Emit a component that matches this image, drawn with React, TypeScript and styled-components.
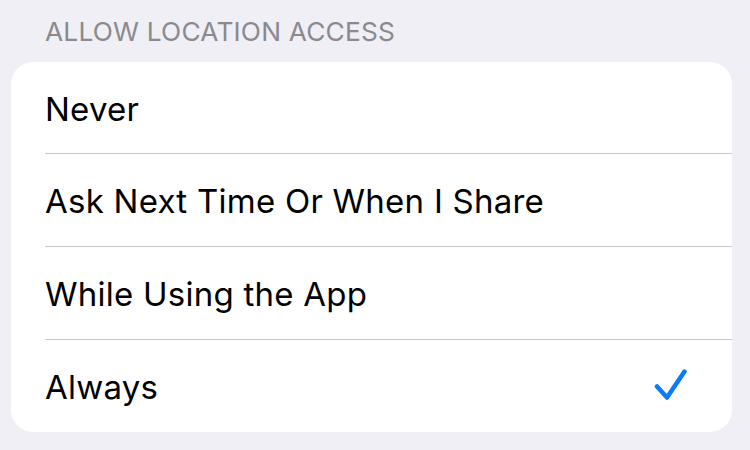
import React from "react";
import styled, { createGlobalStyle } from "styled-components";

const Global = createGlobalStyle`
  html, body { margin: 0; padding: 0; background: #f0eff5; }
  body { font-family: Inter, "Liberation Sans", Arial, sans-serif; -webkit-font-smoothing: antialiased; }
`;

const Page = styled.div`
  width: 750px;
  height: 450px;
  background: #f0eff5;
  display: flex;
  flex-direction: column;
  overflow: hidden;
`;

const SectionHeader = styled.div`
  height: 62px;
  box-sizing: border-box;
  padding: 17px 0 0 45px;
  font-size: 26.3px;
  line-height: 30px;
  color: #8a8a8e;
  letter-spacing: 0.2px;
`;

const Card = styled.div`
  margin: 0 18px 0 11px;
  background: #ffffff;
  border-radius: 22px;
  overflow: hidden;
  display: flex;
  flex-direction: column;
`;

const Row = styled.div<{ $first?: boolean }>`
  position: relative;
  height: ${(p) => (p.$first ? 91 : 93)}px;
  display: flex;
  align-items: center;
  justify-content: space-between;
  padding: 0 44px 0 34px;
  font-size: 33px;
  letter-spacing: 0.25px;
  color: #000;
  &::before {
    content: "";
    display: ${(p) => (p.$first ? "none" : "block")};
    position: absolute;
    top: 0;
    left: 34px;
    right: 0;
    height: 1px;
    background: #c8c7cc;
  }
`;

const Label = styled.span`
  padding-top: 2px;
`;

const Check = () => (
  <svg width="34" height="34" viewBox="0 0 34 34">
    <path
      d="M3 17.5 L13 28.5 L30.5 2.5"
      fill="none"
      stroke="#0a7aff"
      strokeWidth="4.5"
      strokeLinecap="round"
      strokeLinejoin="round"
    />
  </svg>
);

const options = [
  "Never",
  "Ask Next Time Or When I Share",
  "While Using the App",
  "Always",
];

export default function App() {
  return (
    <Page>
      <Global />
      <SectionHeader>ALLOW LOCATION ACCESS</SectionHeader>
      <Card>
        {options.map((o, i) => (
          <Row key={o} $first={i === 0}>
            <Label>{o}</Label>
            {o === "Always" && <Check />}
          </Row>
        ))}
      </Card>
    </Page>
  );
}
